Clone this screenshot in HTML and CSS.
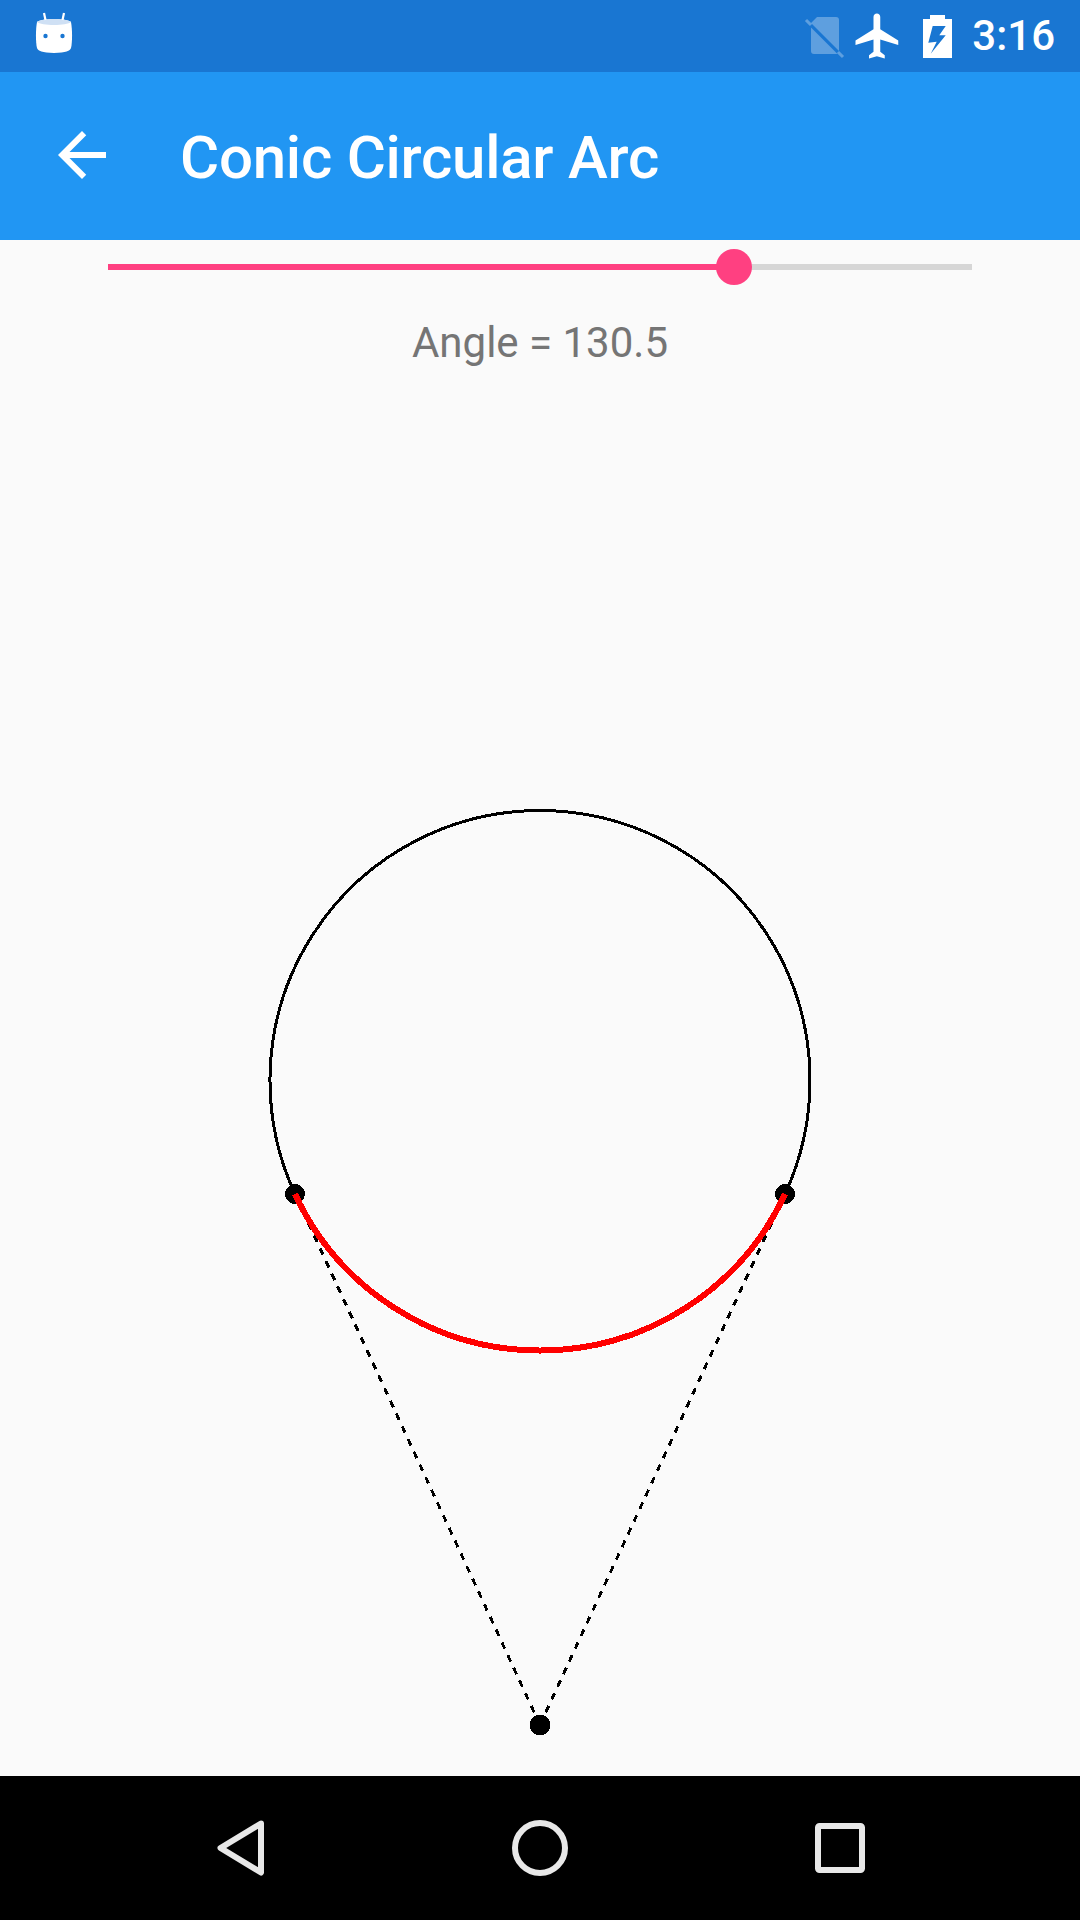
FILE: index.html
```html
<!DOCTYPE html>
<html lang="en">
<head>
<meta charset="utf-8">
<title>Conic Circular Arc</title>
<link rel="stylesheet" href="styles.css">
</head>
<body>
<div class="screen">
  <header class="status-bar">
    <svg class="droid" viewBox="0 0 40 44" width="40" height="44">
      <path class="droid-body" d="M3 10C7 6 33 6 37 10c1.4 7 1.4 21 0 26-1 3-5 4.500-17 5-12-.5-16-2-17-5-1.400-5-1.400-19 0-26z"/>
      <path class="droid-top" d="M3 10C7 6 33 6 37 10 33 14 7 14 3 10z"/>
      <path class="droid-ant" d="M10 1l1.500 7M30 1l-1.500 7"/>
      <circle class="droid-eye" cx="11.500" cy="24" r="2.200"/>
      <circle class="droid-eye" cx="28.500" cy="24" r="2.200"/>
    </svg>
    <div class="status-right">
      <svg class="sim" viewBox="0 0 44 44" width="44" height="44">
        <path d="M8 8l6-6h19a3 3 0 0 1 3 3v31zM8 12.500L34.500 39H11a3 3 0 0 1-3-3z"/>
        <path d="M3 5l5 5M35 37l5 5" class="sim-slash"/>
      </svg>
      <svg class="plane" viewBox="0 0 24 24" width="54" height="54">
        <path d="M21 16v-2l-8-5V3.500c0-.83-.67-1.500-1.500-1.500S10 2.670 10 3.500V9l-8 5v2l8-2.500V19l-2 1.500V22l3.500-1 3.500 1v-1.500L13 19v-5.500l8 2.500z"/>
      </svg>
      <svg class="battery" viewBox="0 0 29 43" width="29" height="43">
        <path fill-rule="evenodd" d="M7 0h15v4h7v39H0V4h7zM9.700 11h13l-6.400 9.300h6.400L7.700 38.700l6-12-8.400 1z"/>
      </svg>
      <span class="clock">3:16</span>
    </div>
  </header>
  <div class="app-bar">
    <svg class="back" viewBox="0 0 24 24" width="72" height="72">
      <path d="M20 11H7.830l5.590-5.590L12 4l-8 8 8 8 1.410-1.410L7.830 13H20v-2z"/>
    </svg>
    <h1 class="title">Conic Circular Arc</h1>
  </div>
  <main class="content">
    <div class="slider">
      <div class="track">
        <div class="track-fill" style="width:72.5%"></div>
        <div class="thumb"></div>
      </div>
    </div>
    <p class="label">Angle = 130.5</p>
    <svg class="diagram" viewBox="0 372 1080 1404" width="1080" height="1404">
      <path class="dash" d="M540 1725L295 1194M540 1725L785 1194"/>
      <path class="circle-line" d="M295 1194A270 270 0 1 1 785 1194"/>
      <circle class="dot" cx="295" cy="1194" r="10"/>
      <circle class="dot" cx="785" cy="1194" r="10"/>
      <circle class="dot" cx="540" cy="1725" r="10.500"/>
      <path class="arc" d="M295 1194A270 270 0 0 0 785 1194"/>
    </svg>
  </main>
  <nav class="nav-bar">
    <svg class="nav-icon back-nav" viewBox="0 0 60 68" width="60" height="68">
      <path d="M51 9.500L10.500 34 51 58.500z"/>
    </svg>
    <svg class="nav-icon home-nav" viewBox="0 0 60 60" width="60" height="60">
      <circle cx="30" cy="30" r="25"/>
    </svg>
    <svg class="nav-icon recent-nav" viewBox="0 0 60 60" width="60" height="60">
      <rect x="8" y="8" width="44" height="44" rx="1.500"/>
    </svg>
  </nav>
</div>
</body>
</html>
```
FILE: styles.css
```css
* { box-sizing: border-box; }
html, body { margin: 0; padding: 0; }
body { background: #fafafa; font-family: Roboto, "Noto Sans", sans-serif; }
svg { display: block; flex: none; }

.screen { width: 1080px; height: 1920px; display: flex; flex-direction: column; overflow: hidden; }

.status-bar { height: 72px; flex: none; background: #1976d2; display: flex; align-items: center; justify-content: space-between; padding: 0 25px 0 34px; }
.droid { margin-top: -4px; }
.droid-body { fill: #fff; }
.droid-top { fill: #cfe0f4; }
.droid-ant { stroke: #fff; stroke-width: 2.200; fill: none; }
.droid-eye { fill: #1976d2; }
.status-right { display: flex; align-items: center; }
.sim { fill: #fff; fill-opacity: .3; margin-right: 2px; margin-top: 2px; }
.sim-slash { stroke: #fff; stroke-opacity: .3; stroke-width: 3; fill: none; }
.plane { fill: #fff; margin-left: 2px; }
.battery { fill: #fff; margin-left: 18px; }
.clock { color: #fff; font-size: 42px; font-weight: 500; line-height: 72px; margin-left: 20px; }

.app-bar { height: 168px; flex: none; background: #2196f3; display: flex; align-items: center; padding-left: 46px; }
.back { fill: #fff; margin-top: -2px; }
.title { margin: 4px 0 0 62px; color: #fff; font-size: 60px; font-weight: 500; line-height: 72px; letter-spacing: -.25px; }

.content { flex: 1; display: flex; flex-direction: column; background: #fafafa; }
.slider { height: 54px; flex: none; padding: 0 108px; display: flex; align-items: center; }
.track { position: relative; width: 100%; height: 6px; background: #d6d6d6; }
.track-fill { height: 100%; background: #ff4081; }
.thumb { position: absolute; left: 72.5%; top: 50%; width: 36px; height: 36px; margin: -18px 0 0 -18px; border-radius: 50%; background: #ff4081; }
.label { height: 78px; flex: none; margin: 0; text-align: center; color: #757575; font-size: 42px; line-height: 98px; }

.diagram { shape-rendering: crispEdges; }
.circle-line { fill: none; stroke: #000; stroke-width: 3; }
.dash { fill: none; stroke: #000; stroke-width: 3; stroke-dasharray: 7 7; }
.dot { fill: #000; }
.arc { fill: none; stroke: #f00; stroke-width: 6; }

.nav-bar { height: 144px; flex: none; background: #000; position: relative; }
.nav-icon { position: absolute; fill: none; stroke: #e8e8e8; stroke-width: 6; stroke-linejoin: round; }
.back-nav { left: 210px; top: 38px; }
.home-nav { left: 510px; top: 42px; }
.recent-nav { left: 810px; top: 42px; }
```
